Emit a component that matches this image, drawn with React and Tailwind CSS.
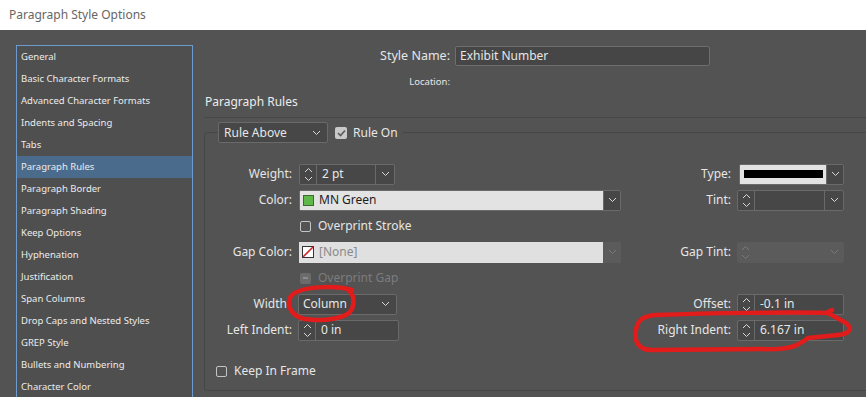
import React from 'react'

const items = [
  'General', 'Basic Character Formats', 'Advanced Character Formats', 'Indents and Spacing', 'Tabs',
  'Paragraph Rules', 'Paragraph Border', 'Paragraph Shading', 'Keep Options', 'Hyphenation',
  'Justification', 'Span Columns', 'Drop Caps and Nested Styles', 'GREP Style', 'Bullets and Numbering',
  'Character Color',
]

function Chevron({ up, dim }){
  return (
    <svg width="9" height="6" viewBox="0 0 9 6" className="block">
      <polyline points={up ? '1,5 4.5,1.5 8,5' : '1,1 4.5,4.5 8,1'} fill="none"
        stroke={dim ? '#7a7a7a' : '#d8d8d8'} strokeWidth="1" />
    </svg>
  )
}

function Spin({ dim }){
  return (
    <div className={`w-[17px] flex flex-col items-center justify-center gap-[3px] ${dim ? '' : 'border-r border-[#6a6a6a]'}`}>
      <Chevron up dim={dim} />
      <Chevron dim={dim} />
    </div>
  )
}

function Spinner({ value, arrow, className = '' }){
  return (
    <div className={`h-[21px] flex border border-[#6a6a6a] rounded-[2px] bg-[#474747] ${className}`}>
      <Spin />
      <div className="flex-1 pl-[5px] flex items-center text-[12px] text-[#e6e6e6]">{value}</div>
      {arrow && (
        <div className="w-[19px] border-l border-[#6a6a6a] flex items-center justify-center"><Chevron /></div>
      )}
    </div>
  )
}

function Check({ checked, disabled }){
  if (disabled) return (
    <span className="w-[11px] h-[11px] rounded-[2px] bg-[#6b6b6b] flex items-center justify-center">
      <span className="w-[5px] h-[2px] bg-[#8c8c8c]" />
    </span>
  )
  if (checked) return (
    <span className="w-[12px] h-[12px] rounded-[2px] bg-[#c9c9c9] flex items-center justify-center">
      <svg width="9" height="8" viewBox="0 0 9 8"><polyline points="1,4 3.5,6.5 8,1.5" fill="none" stroke="#5a5a5a" strokeWidth="1.6" /></svg>
    </span>
  )
  return <span className="w-[11px] h-[11px] rounded-[2px] border border-[#c4c4c4]" />
}

function Label({ children, right }){
  return (
    <div className={`flex items-center justify-end text-[12px] text-[#e6e6e6] ${right ? 'pr-[6px]' : 'pr-[7px]'}`}>{children}</div>
  )
}

export default function App(){
  return (
    <div className="relative w-[866px] h-[397px] overflow-hidden bg-[#535353]" style={{ fontFamily: '"Noto Sans", sans-serif' }}>
      <div className="h-[30px] bg-white flex items-center pl-[9px] text-[12px] text-[#666]">Paragraph Style Options</div>

      <div className="flex pl-[16px] pt-[15px]">
        <ul className="w-[177px] h-[400px] shrink-0 border border-[#6b9bcf] bg-[#4f4f4f]">
          {items.map(t => (
            <li key={t} className={`h-[22px] flex items-center pl-[4px] text-[9.5px] text-[#ececec] ${t === 'Paragraph Rules' ? 'bg-[#4b6b8c]' : ''}`}>{t}</li>
          ))}
        </ul>

        <div className="pl-[11px] pt-[1px] w-[700px] shrink-0">
          <div className="flex items-center h-[20px]">
            <div className="w-[246px] text-right text-[12.5px] text-[#e6e6e6]">Style Name:</div>
            <div className="ml-[5px] w-[255px] h-[20px] border border-[#6e6e6e] rounded-[2px] bg-[#464646] flex items-center pl-[4px] text-[12px] text-[#e6e6e6]">Exhibit Number</div>
          </div>
          <div className="mt-[9px] h-[14px] flex items-center">
            <div className="w-[246px] text-right text-[9.5px] text-[#e6e6e6]">Location:</div>
          </div>
          <div className="mt-[5px] h-[16px] flex items-center pl-[1px] text-[12px] text-[#ececec]">Paragraph Rules</div>
          <div className="mt-[7px] h-px bg-[#474747]" />

          <fieldset className="mt-[4px] w-[680px] border border-[#464646] rounded-[3px] pb-[8px]">
            <legend className="ml-[13px] pr-[5px] flex items-center">
              <div className="w-[110px] h-[21px] border border-[#6a6a6a] rounded-[2px] bg-[#474747] flex items-center justify-between pl-[5px] pr-[6px] text-[12px] text-[#e6e6e6]">
                Rule Above <Chevron />
              </div>
              <span className="ml-[7px]"><Check checked /></span>
              <span className="ml-[6px] text-[12px] text-[#e6e6e6]">Rule On</span>
            </legend>

            <div className="mt-[18px] grid grid-cols-[94px_322px_116px_107px] auto-rows-[26px] items-center">
              <Label>Weight:</Label>
              <div><Spinner value="2 pt" arrow className="w-[96px]" /></div>
              <Label right>Type:</Label>
              <div className="h-[21px] flex border border-[#6a6a6a] rounded-[2px] ml-[2px]">
                <div className="flex-1 bg-[#e3e3e3] flex items-center pl-[4px] pr-[3px]"><div className="h-[8px] w-full bg-black" /></div>
                <div className="w-[17px] bg-[#474747] border-l border-[#6a6a6a] flex items-center justify-center"><Chevron /></div>
              </div>

              <Label>Color:</Label>
              <div className="h-[21px] flex border border-[#6a6a6a] rounded-[2px]">
                <div className="flex-1 bg-[#e3e3e3] flex items-center pl-[3px] text-[12px] text-[#1e1e1e]">
                  <span className="w-[11px] h-[11px] bg-[#5fb84a] border border-[#3a6a30] mr-[5px]" />MN Green
                </div>
                <div className="w-[17px] bg-[#474747] border-l border-[#6a6a6a] flex items-center justify-center"><Chevron /></div>
              </div>
              <Label right>Tint:</Label>
              <div><Spinner value="" arrow /></div>

              <div />
              <div className="flex items-center pl-[1px]">
                <Check />
                <span className="ml-[7px] text-[12px] text-[#e6e6e6]">Overprint Stroke</span>
              </div>
              <div />
              <div />

              <Label>Gap Color:</Label>
              <div className="h-[21px] flex rounded-[2px]">
                <div className="flex-1 bg-[#e0e0e0] flex items-center pl-[3px] text-[12px] text-[#8a8a8a]">
                  <svg width="12" height="12" viewBox="0 0 12 12" className="mr-[5px]">
                    <rect x="0.5" y="0.5" width="11" height="11" fill="#fff" stroke="#333" />
                    <line x1="1" y1="11" x2="11" y2="1" stroke="#d0202a" strokeWidth="1.6" />
                  </svg>
                  [None]
                </div>
                <div className="w-[18px] bg-[#5b5b5b] flex items-center justify-center"><Chevron dim /></div>
              </div>
              <Label right>Gap Tint:</Label>
              <div className="h-[21px] flex rounded-[2px] bg-[#5b5b5b]">
                <Spin dim />
                <div className="flex-1" />
                <div className="w-[19px] flex items-center justify-center"><Chevron dim /></div>
              </div>

              <div />
              <div className="flex items-center pl-[1px]">
                <Check disabled />
                <span className="ml-[7px] text-[12px] text-[#7c7c7c]">Overprint Gap</span>
              </div>
              <div />
              <div />

              <div className="flex items-center justify-end pr-[12px] text-[12px] text-[#e6e6e6]">Width</div>
              <div className="-ml-[1px]">
                <div className="w-[99px] h-[21px] border border-[#6a6a6a] rounded-[2px] bg-[#474747] flex items-center justify-between pl-[4px] pr-[6px] text-[12px] text-[#e6e6e6]">
                  Column <Chevron />
                </div>
              </div>
              <Label right>Offset:</Label>
              <div><Spinner value="-0.1 in" /></div>

              <Label>Left Indent:</Label>
              <div className="-ml-[1px]"><Spinner value="0 in" className="w-[101px]" /></div>
              <Label right>Right Indent:</Label>
              <div><Spinner value="6.167 in" /></div>
            </div>

            <div className="mt-[17px] h-[22px] flex items-center pl-[11px]">
              <Check />
              <span className="ml-[7px] text-[12px] text-[#e6e6e6]">Keep In Frame</span>
            </div>
          </fieldset>
        </div>
      </div>

      <svg className="absolute inset-0 pointer-events-none" width="866" height="397" viewBox="0 0 866 397">
        <g fill="none" stroke="#e21b1b" strokeWidth="4.5" strokeLinecap="round" strokeLinejoin="round">
          <path d="M 352 290 C 335 285, 300 286, 291 296 C 286 304, 290 316, 305 319 C 325 322, 348 318, 352 309 C 355 300, 353 293, 347 289" />
          <path d="M 656 315 C 710 313, 790 312, 828 313 L 846 323 C 853 329, 849 334, 838 335 L 808 338 C 800 344, 794 348, 778 349 L 652 350 C 638 350, 634 341, 636 330 C 637 322, 641 316, 656 315 M 826 313 L 832 310" />
        </g>
      </svg>
    </div>
  )
}
